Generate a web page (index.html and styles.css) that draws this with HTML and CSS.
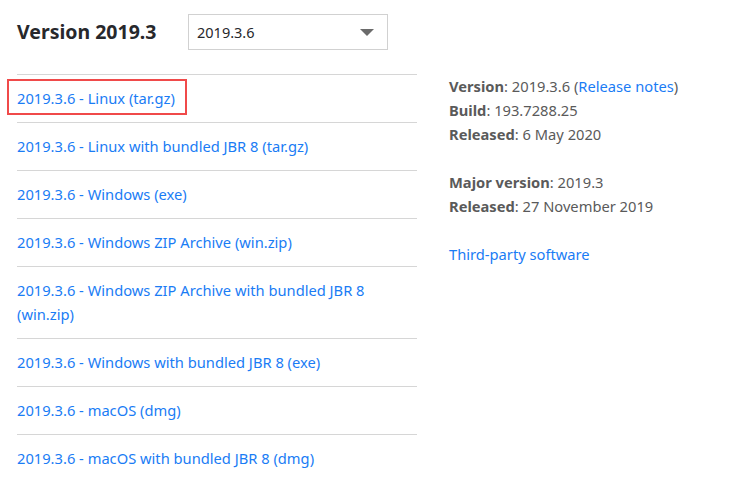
FILE: index.html
```html
<!DOCTYPE html>
<html>
<head>
<meta charset="utf-8">
<link rel="stylesheet" href="styles.css">
</head>
<body>
<div class="page">
  <div class="head">
    <h2 class="title">Version 2019.3</h2>
    <div class="select">
      <span class="select-value">2019.3.6</span>
      <span class="caret"></span>
    </div>
  </div>
  <div class="cols">
    <ul class="downloads">
      <li class="row"><a class="link marked" href="#">2019.3.6 - Linux (tar.gz)</a></li>
      <li class="row"><a class="link" href="#">2019.3.6 - Linux with bundled JBR 8 (tar.gz)</a></li>
      <li class="row"><a class="link" href="#">2019.3.6 - Windows (exe)</a></li>
      <li class="row"><a class="link" href="#">2019.3.6 - Windows ZIP Archive (win.zip)</a></li>
      <li class="row"><a class="link" href="#">2019.3.6 - Windows ZIP Archive with bundled JBR 8 (win.zip)</a></li>
      <li class="row"><a class="link" href="#">2019.3.6 - Windows with bundled JBR 8 (exe)</a></li>
      <li class="row"><a class="link" href="#">2019.3.6 - macOS (dmg)</a></li>
      <li class="row"><a class="link" href="#">2019.3.6 - macOS with bundled JBR 8 (dmg)</a></li>
    </ul>
    <div class="info">
      <p class="para"><b>Version</b>: 2019.3.6 (<a class="link" href="#">Release notes</a>)<br><b>Build</b>: 193.7288.25<br><b>Released</b>: 6 May 2020</p>
      <p class="para"><b>Major version</b>: 2019.3<br><b>Released</b>: 27 November 2019</p>
      <p class="para"><a class="link" href="#">Third-party software</a></p>
    </div>
  </div>
</div>
</body>
</html>
```
FILE: styles.css
```css
html, body {
  margin: 0;
  padding: 0;
  background: #fff;
}
body {
  font-family: "Noto Sans", "DejaVu Sans", sans-serif;
  font-size: 14.7px;
  line-height: 24px;
  color: #5a5a5a;
}
.page {
  padding: 14px 0 0 17px;
}
.head {
  display: flex;
  align-items: center;
  height: 36px;
}
.title {
  margin: 0;
  width: 171px;
  font-size: 19.5px;
  font-weight: bold;
  color: #27282c;
  line-height: 36px;
}
.select {
  box-sizing: border-box;
  width: 200px;
  height: 36px;
  border: 1px solid #d1d1d1;
  display: flex;
  align-items: center;
  justify-content: space-between;
  padding: 0 13px 0 8px;
  color: #27282c;
  font-size: 14.5px;
}
.caret {
  width: 0;
  height: 0;
  border-left: 7px solid transparent;
  border-right: 7px solid transparent;
  border-top: 7px solid #6b6b6b;
}
.cols {
  display: flex;
  gap: 32px;
  margin-top: 24px;
}
.downloads {
  list-style: none;
  margin: 0;
  padding: 0;
  width: 400px;
}
.row {
  border-top: 1px solid #d6d6d6;
  padding: 11px 0 12px;
}
.link {
  color: #1a7cf5;
  text-decoration: none;
}
.marked {
  position: relative;
}
.marked::after {
  content: "";
  position: absolute;
  left: -10px;
  right: -12px;
  top: -9px;
  bottom: -7px;
  border: 2px solid #f04a4a;
}
.info {
  padding-top: 0;
}
.para {
  margin: 0 0 24px;
}
.para b {
  color: #5a5a5a;
}
```
